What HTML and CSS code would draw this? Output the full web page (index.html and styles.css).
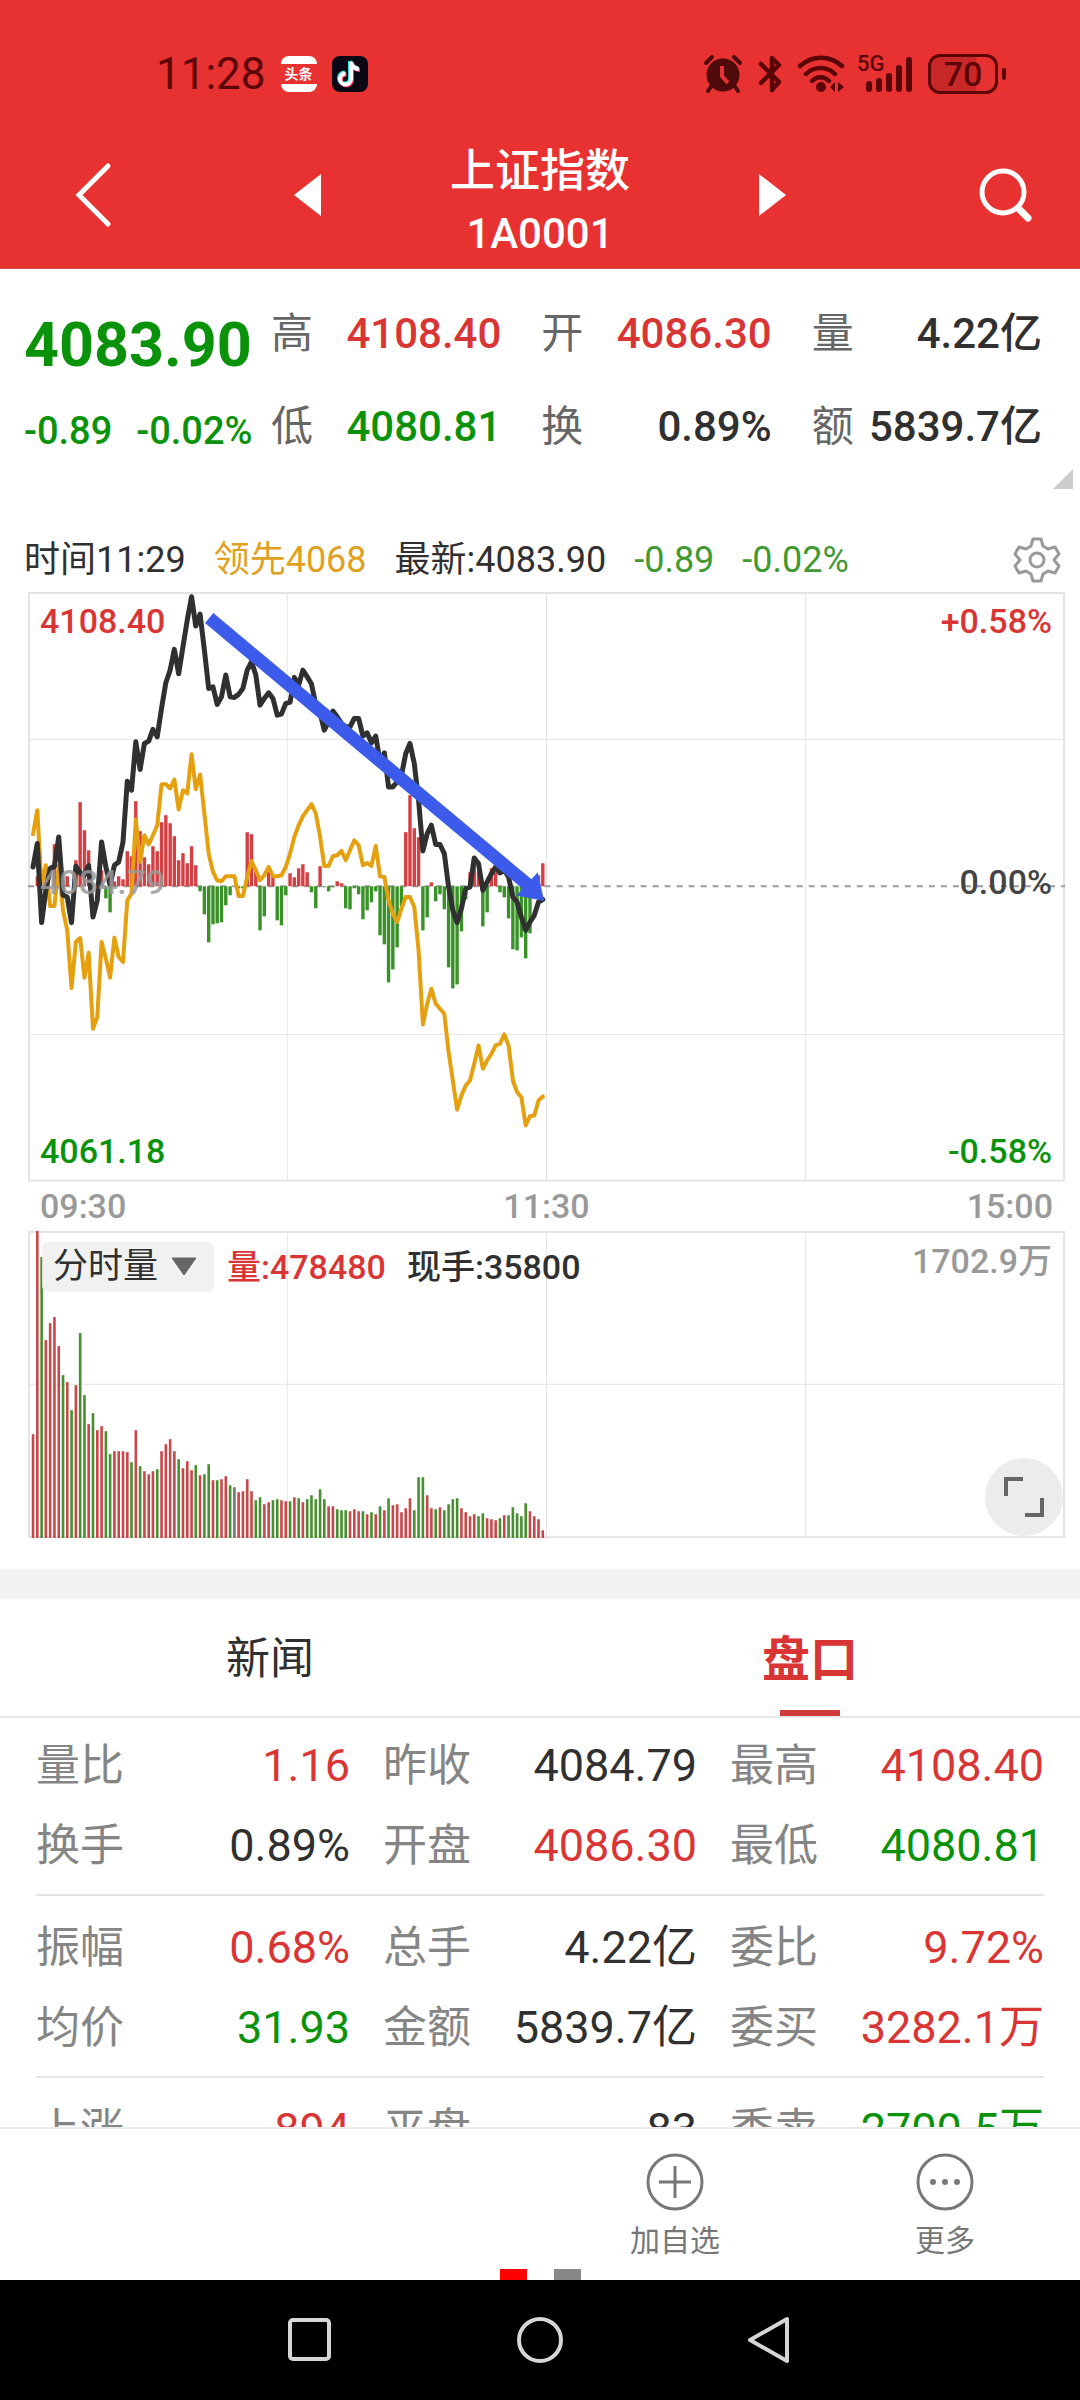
FILE: index.html
```
<!DOCTYPE html>
<html lang="zh-CN">
<head>
    <meta charset="UTF-8">
    <meta name="viewport" content="width=device-width, initial-scale=1.0">
    <title>上证指数 1A0001</title>
    <link rel="stylesheet" href="styles.css">
</head>
<body>
<div class="app">
    <header class="top">
        <div class="status-bar">
            <span class="clock">11:28</span>
            <span class="toutiao"><span>头条</span></span>
            <svg class="app-icon" width="36" height="36" viewBox="0 0 36 36">
                <rect width="36" height="36" rx="8" fill="#0b0714"/>
                <g fill="none" stroke-width="4">
                    <path d="M19 6v17a5.500 5.500 0 1 1-5.500-5.500M19 6c1 5 4 7 8 7" stroke="#35e6e0" transform="translate(-1 -1)"/>
                    <path d="M19 6v17a5.500 5.500 0 1 1-5.500-5.500M19 6c1 5 4 7 8 7" stroke="#f5355c" transform="translate(1 1)"/>
                    <path d="M19 6v17a5.500 5.500 0 1 1-5.500-5.500M19 6c1 5 4 7 8 7" stroke="#fff"/>
                </g>
            </svg>
            <span class="spacer"></span>
            <svg width="40" height="40" viewBox="0 0 40 40" fill="#4f0a0c">
                <circle cx="20" cy="21" r="16.500"/>
                <path d="M9 31l-4 6M31 31l4 6M3 9l6-6M37 9l-6-6" stroke="#4f0a0c" stroke-width="4" stroke-linecap="round"/>
                <path d="M19 12v10l6 7" fill="none" stroke="#e83131" stroke-width="4"/>
            </svg>
            <svg width="24" height="40" viewBox="0 0 24 40" fill="none" stroke="#5b0508" stroke-width="4.500" stroke-linejoin="round" stroke-linecap="round">
                <path d="M3 10l18 18-7 8V4l7 7L3 29"/>
            </svg>
            <svg width="48" height="40" viewBox="0 0 48 40">
                <g fill="none" stroke="#5b0508" stroke-width="4.500" stroke-linecap="round">
                    <path d="M3 12c12-11 30-11 42 0M9 20c8-8 21-8 29 0M15 27c5-5 12-5 17 0"/>
                </g>
                <circle cx="24" cy="33" r="5" fill="#5b0508"/>
                <path d="M38 28v10l-5-5zM41 28v10l6-5z" fill="#5b0508"/>
            </svg>
            <div class="signal">
                <span>5G</span>
                <svg width="48" height="40" viewBox="0 0 48 40" stroke="#5b0508" stroke-width="6" stroke-linecap="round">
                    <path d="M4 30v5M14 27v8M24 22v13M34 14v21M44 6v29"/>
                </svg>
            </div>
            <div class="battery">70</div>
        </div>
        <div class="title-bar">
            <button aria-label="返回">
                <svg width="40" height="66" viewBox="0 0 40 66" fill="none" stroke="#fff" stroke-width="5" stroke-linecap="round"><path d="M36 4L7 33l29 29"/></svg>
            </button>
            <button aria-label="上一个">
                <svg width="27" height="42" viewBox="0 0 27 42" fill="#fff"><path d="M27 0v42L0 21z"/></svg>
            </button>
            <h1>上证指数<small>1A0001</small></h1>
            <button aria-label="下一个">
                <svg width="27" height="42" viewBox="0 0 27 42" fill="#fff"><path d="M0 0v42l27-21z"/></svg>
            </button>
            <button class="search" aria-label="搜索">
                <svg width="54" height="54" viewBox="0 0 54 54" fill="none" stroke="#fff" stroke-linecap="round"><circle cx="25" cy="24" r="21" stroke-width="5"/><path d="M41 41l9 9" stroke-width="7"/></svg>
            </button>
        </div>
    </header>

    <section class="quote">
        <div class="price down">
            <strong>4083.90</strong>
            <p><span>-0.89</span><span>-0.02%</span></p>
        </div>
        <dl class="metrics">
            <div><dt>高</dt><dd class="up">4108.40</dd></div>
            <div><dt>开</dt><dd class="up">4086.30</dd></div>
            <div><dt>量</dt><dd>4.22亿</dd></div>
            <div><dt>低</dt><dd class="down">4080.81</dd></div>
            <div><dt>换</dt><dd>0.89%</dd></div>
            <div><dt>额</dt><dd>5839.7亿</dd></div>
        </dl>
        <svg class="corner" width="20" height="20" viewBox="0 0 20 20"><path d="M20 0v20H0z" fill="#ccc"/></svg>
    </section>

    <section class="charts">
        <div class="legend">
            <span>时间11:29</span>
            <span class="lead">领先4068</span>
            <span>最新:4083.90</span>
            <span class="fall">-0.89</span>
            <span class="fall">-0.02%</span>
            <button aria-label="设置">
                <svg width="48" height="48" viewBox="0 0 48 48" fill="none" stroke="#999" stroke-width="3" stroke-linejoin="round">
                    <path d="M20 3h8l2 7 5 3 7-2 4 7-5 6 5 6-4 7-7-2-5 3-2 7h-8l-2-7-5-3-7 2-4-7 5-6-5-6 4-7 7 2 5-3z"/>
                    <circle cx="24" cy="24" r="7"/>
                </svg>
            </button>
        </div>

        <div class="chart">
            <svg viewBox="0 0 1036 589">
                <g class="grid">
                    <path d="M1 1H1035V588H1Z" stroke-width="2"/>
                    <path d="M259 0V589M518 0V589M777 0V589M0 147H1036M0 442H1036"/>
                </g>
                <path class="zero" d="M0 294H1036"/>
                <g id="power-bars"></g>
                <polyline id="lead-line" class="lead-line"/>
                <polyline id="price-line" class="price-line"/>
                <g class="arrow">
                    <path d="M181 26L500 293" stroke-width="13"/>
                    <path d="M515 308L489 303L509 281Z"/>
                </g>
            </svg>
            <span class="tag left high up">4108.40</span>
            <span class="tag left mid base">4084.79</span>
            <span class="tag left low down">4061.18</span>
            <span class="tag right high up">+0.58%</span>
            <span class="tag right mid">0.00%</span>
            <span class="tag right low down">-0.58%</span>
        </div>

        <div class="time-axis"><span>09:30</span><span>11:30</span><span>15:00</span></div>

        <div class="chart">
            <svg viewBox="0 0 1036 307">
                <g class="grid">
                    <path d="M1 1H1035V306H1Z" stroke-width="2"/>
                    <path d="M259 0V307M518 0V307M777 0V307M0 153H1036"/>
                </g>
                <g id="volume-bars"></g>
            </svg>
            <div class="volume-head">
                <div class="picker">
                    <select aria-label="指标"><option>分时量</option></select>
                    <svg width="28" height="20" viewBox="0 0 28 20"><path d="M2 1h24L14 18z" fill="#666" stroke="#666" stroke-linejoin="round"/></svg>
                </div>
                <span class="up">量:478480</span>
                <span>现手:35800</span>
                <span class="max">1702.9万</span>
            </div>
            <button class="expand" aria-label="全屏">
                <svg width="40" height="40" viewBox="0 0 40 40" fill="none" stroke="#666" stroke-width="4"><path d="M2 19V2h17M38 21v17H21"/></svg>
            </button>
        </div>
    </section>

    <nav class="tabs">
        <button>新闻</button>
        <button class="active">盘口</button>
    </nav>

    <div class="detail">
        <table>
            <tbody>
                <tr><th>量比</th><td class="up">1.16</td><th>昨收</th><td>4084.79</td><th>最高</th><td class="up">4108.40</td></tr>
                <tr><th>换手</th><td>0.89%</td><th>开盘</th><td class="up">4086.30</td><th>最低</th><td class="down">4080.81</td></tr>
            </tbody>
            <tbody>
                <tr><th>振幅</th><td class="up">0.68%</td><th>总手</th><td>4.22亿</td><th>委比</th><td class="up">9.72%</td></tr>
                <tr><th>均价</th><td class="down">31.93</td><th>金额</th><td>5839.7亿</td><th>委买</th><td class="up">3282.1万</td></tr>
            </tbody>
            <tbody>
                <tr><th>上涨</th><td class="up">894</td><th>平盘</th><td>83</td><th>委卖</th><td class="down">2700.5万</td></tr>
            </tbody>
        </table>
    </div>

    <footer class="actions">
        <div class="action-row">
            <button class="add">
                <svg width="58" height="58" viewBox="0 0 58 58" fill="none" stroke="#777" stroke-width="3"><circle cx="29" cy="29" r="27"/><path d="M29 13v32M13 29h32"/></svg>
                加自选
            </button>
            <button>
                <svg width="58" height="58" viewBox="0 0 58 58" fill="#777"><circle cx="29" cy="29" r="27" fill="none" stroke="#777" stroke-width="3"/><circle cx="17" cy="29" r="3"/><circle cx="29" cy="29" r="3"/><circle cx="41" cy="29" r="3"/></svg>
                更多
            </button>
        </div>
        <div class="pager"><i class="on"></i><i></i></div>
    </footer>

    <nav class="system-nav">
        <button aria-label="最近任务"><svg width="48" height="48" viewBox="0 0 48 48"><rect x="4" y="4" width="39" height="39" rx="3"/></svg></button>
        <button aria-label="主屏幕"><svg width="48" height="48" viewBox="0 0 48 48"><circle cx="24" cy="24" r="21"/></svg></button>
        <button aria-label="后退"><svg width="48" height="48" viewBox="0 0 48 48"><path d="M41 3v42L4 24z"/></svg></button>
    </nav>
</div>

<script>
    const STEP = 4.28;
    const FIRST = 5;
    const ZERO = 294;
    const RED = '#d33f42';
    const GREEN = '#399128';

    // one value per minute, 09:30 - 11:29
    const price = [
        860, 790, 1027, 930, 865, 858, 770, 945, 950, 1027, 858, 878, 885, 856, 1010, 960, 785, 860, 915, 855,
        845, 785, 603, 630, 485, 568, 490, 483, 448, 470, 385, 308, 270, 208, 281, 200, 120, 50, 138, 102,
        210, 325, 320, 373, 350, 285, 350, 352, 343, 325, 270, 245, 285, 375, 355, 338, 355, 405, 402, 370,
        367, 292, 315, 270, 290, 312, 375, 400, 450, 425, 393, 410, 430, 440, 440, 415, 415, 468, 458, 488,
        468, 545, 518, 620, 620, 605, 585, 520, 490, 550, 660, 812, 760, 735, 793, 793, 820, 920, 990, 1027,
        985, 925, 920, 833, 850, 930, 905, 880, 860, 878, 870, 890, 950, 965, 1010, 1050, 1025, 1005, 965, 958
    ];
    const lead = [
        762, 690, 920, 855, 977, 977, 857, 990, 1050, 1223, 1085, 1073, 1192, 1117, 1345, 1310, 1085, 1135, 1192, 1072,
        1130, 1145, 960, 940, 718, 845, 765, 793, 765, 735, 612, 612, 625, 598, 688, 630, 640, 522, 627, 583,
        700, 820, 875, 900, 903, 888, 888, 888, 947, 947, 890, 843, 870, 900, 885, 860, 888, 888, 885, 860,
        820, 770, 735, 708, 690, 672, 700, 770, 857, 857, 828, 825, 812, 840, 810, 780, 795, 855, 848, 857,
        797, 888, 890, 960, 1000, 1025, 985, 950, 950, 980, 1110, 1332, 1270, 1225, 1270, 1285, 1300, 1415, 1500, 1588,
        1545, 1515, 1500, 1450, 1395, 1465, 1440, 1420, 1395, 1390, 1362, 1395, 1500, 1535, 1550, 1635, 1607, 1605, 1560, 1548
    ];
    const power = [
        0, 10, -4, 6, 0, 42, 20, 0, 10, 0, 26, 84, 56, 36, 0, 0, 16, -12, -26, 5,
        10, 7, 35, 30, 85, 55, 29, 22, 40, 35, 64, 71, 63, 50, 26, 33, 23, 40, 21, -5,
        -28, -56, -38, -37, -36, -19, -9, 0, -2, -2, 54, 52, 17, -44, -30, 15, 10, -34, -39, -9,
        13, 9, 18, 22, 14, -6, -22, 20, -1, -5, -1, 5, 3, -22, -23, -2, -8, -33, -24, -16,
        -5, -49, -58, -96, -83, -61, -20, 54, 91, 58, 49, -44, -31, 4, -15, -8, -23, -81, -102, -98,
        -45, -13, 14, 26, 15, -40, -26, 18, 14, -6, -11, -32, -63, -64, -51, -72, -47, -6, 11, 23
    ];
    const volume = [
        104, 308, 281, 198, 215, 221, 192, 163, 156, 128, 153, 205, 143, 114, 125, 108, 112, 107, 84, 87,
        87, 87, 86, 76, 108, 72, 67, 64, 67, 69, 87, 94, 99, 87, 79, 70, 77, 68, 73, 63,
        64, 74, 58, 58, 59, 62, 53, 51, 46, 47, 59, 47, 38, 41, 34, 36, 38, 39, 38, 37,
        37, 41, 40, 36, 39, 43, 39, 49, 39, 32, 32, 29, 28, 28, 27, 29, 27, 27, 24, 26,
        24, 32, 28, 40, 33, 34, 26, 30, 40, 28, 61, 61, 43, 30, 29, 31, 28, 34, 39, 40,
        30, 26, 22, 24, 22, 25, 20, 19, 18, 20, 23, 23, 31, 25, 22, 35, 27, 22, 19, 8
    ];
    // r = up minute, g = down minute, - = flat
    const volumeSide =
        'rrgrrrrgrgrggrgrrggr' +
        'rrrgrgrrrgrrrrgrrrgr' +
        'ggrgrrg-rrrrggrrggrr' +
        'grgrgggggrrgggrrrgrg' +
        'rgrgrrrrrgggrrgrgggg' +
        'rrrrggrrrgrgggggrrrr';

    function x(i) {
        return FIRST + i * STEP;
    }

    function drawLine(id, values) {
        const points = values.map((v, i) => `${x(i).toFixed(1)},${(v / 3 - 12).toFixed(1)}`);
        document.getElementById(id).setAttribute('points', points.join(' '));
    }

    function bar(i, top, height, width, color) {
        return `<rect x="${(x(i) - width / 2).toFixed(1)}" y="${top}" width="${width}" height="${height}" fill="${color}"/>`;
    }

    drawLine('price-line', price);
    drawLine('lead-line', lead);

    document.getElementById('power-bars').innerHTML = power.map((v, i) =>
        bar(i, v > 0 ? ZERO - v : ZERO, Math.abs(v), 3.4, v > 0 ? RED : GREEN)).join('');

    const sideColor = { r: '#c8484a', g: '#47902f', '-': '#777' };
    document.getElementById('volume-bars').innerHTML = volume.map((v, i) =>
        bar(i, 307 - v, v, 2.6, sideColor[volumeSide[i]])).join('');
</script>
</body>
</html>
```
FILE: styles.css
```
* {
    box-sizing: border-box;
}

body {
    margin: 0;
    font-family: Roboto, "Noto Sans CJK SC", sans-serif;
    font-size: 44px;
    color: #303030;
    background: #fff;
}

button,
select {
    margin: 0;
    padding: 0;
    border: none;
    background: none;
    font: inherit;
    color: inherit;
}

svg {
    display: block;
    flex: none;
}

.app {
    display: flex;
    flex-direction: column;
    height: 100vh;
}

.up {
    color: #d93535;
}

.down {
    color: #0a930a;
}

/* header */
.top {
    background: #e83131;
    color: #fff;
    padding-top: 46px;
    border-bottom: 1px solid #c05050;
}

.status-bar {
    display: flex;
    align-items: center;
    height: 56px;
    padding: 0 82px 0 156px;
    gap: 15px;
    color: #5b0508;
}

.spacer {
    flex: 1;
}

.toutiao {
    display: flex;
    align-items: center;
    width: 36px;
    height: 36px;
    border-radius: 8px;
    background: #fff;
}

.toutiao span {
    flex: 1;
    background: #e83131;
    color: #fff;
    font-size: 14px;
    font-weight: bold;
    line-height: 20px;
    text-align: center;
}

.signal {
    display: flex;
    position: relative;
    padding-left: 5px;
}

.signal span {
    position: absolute;
    left: -3px;
    top: 0;
    font-size: 22px;
    font-weight: 500;
    line-height: 20px;
}

.battery {
    position: relative;
    width: 70px;
    height: 40px;
    border: 3px solid #5b0508;
    border-radius: 12px;
    background: linear-gradient(90deg, #c82828 70%, transparent 70%);
    font-size: 34px;
    font-weight: 500;
    line-height: 34px;
    text-align: center;
}

.battery::after {
    content: "";
    position: absolute;
    right: -11px;
    top: 11px;
    width: 4px;
    height: 12px;
    border-radius: 2px;
    background: #5b0508;
}

.title-bar {
    display: grid;
    grid-template-columns: 17fr 23fr 20fr 23fr 17fr;
    align-items: center;
    height: 166px;
    padding-top: 20px;
}

.title-bar button {
    display: flex;
    justify-content: center;
}

.title-bar .search {
    justify-content: flex-end;
    padding-right: 48px;
}

.title-bar h1 {
    margin: 0;
    padding-top: 16px;
    font-size: 45px;
    font-weight: 500;
    line-height: 62px;
    text-align: center;
    white-space: nowrap;
}

.title-bar small {
    display: block;
    font-size: 42px;
}

/* quote */
.quote {
    display: flex;
    position: relative;
    height: 262px;
    padding: 38px 38px 0 24px;
}

.price {
    flex: 0 0 247px;
}

.price strong {
    display: block;
    font-size: 61px;
    font-weight: bold;
    line-height: 76px;
}

.price p {
    display: flex;
    gap: 24px;
    margin: 24px 0 0;
    font-size: 38px;
    font-weight: 500;
    line-height: 48px;
    white-space: nowrap;
}

.metrics {
    flex: 1;
    display: grid;
    grid-template-columns: repeat(3, 1fr);
    align-content: start;
    gap: 43px 40px;
    margin: 0;
    padding-top: 2px;
    font-size: 42px;
    line-height: 50px;
}

.metrics div {
    display: flex;
    justify-content: space-between;
    white-space: nowrap;
}

.metrics dt {
    color: #666;
}

.metrics dd {
    margin: 0;
    font-weight: 500;
}

.corner {
    position: absolute;
    right: 7px;
    top: 200px;
}

/* charts */
.charts {
    padding: 0 15px 31px 28px;
}

.legend {
    display: flex;
    align-items: center;
    gap: 28px;
    height: 61px;
    margin-left: -4px;
    padding-bottom: 4px;
    font-size: 36px;
    line-height: 46px;
    white-space: nowrap;
}

.legend .lead {
    color: #e0a020;
}

.legend .fall {
    color: #3f9a30;
}

.legend button {
    margin-left: auto;
    margin-right: 4px;
}

.chart {
    position: relative;
}

.chart > svg {
    width: 100%;
    height: auto;
}

.grid path {
    fill: none;
    stroke: #e4e4e4;
}

.zero {
    stroke: #999;
    stroke-width: 2;
    stroke-dasharray: 6 6;
}

.price-line,
.lead-line {
    fill: none;
    stroke: #303030;
    stroke-width: 5;
    stroke-linejoin: round;
    stroke-linecap: round;
}

.lead-line {
    stroke: #e5a00f;
    stroke-width: 4;
}

.arrow path {
    fill: #3d5bea;
    stroke: #3d5bea;
}

.tag {
    position: absolute;
    font-size: 34px;
    font-weight: 500;
    line-height: 40px;
}

.tag.left {
    left: 12px;
}

.tag.right {
    right: 13px;
}

.tag.high {
    top: 9px;
}

.tag.mid {
    top: 270px;
    color: #444;
}

.tag.low {
    bottom: 11px;
}

.tag.base {
    color: #999;
    opacity: 0.85;
}

.time-axis {
    display: flex;
    justify-content: space-between;
    padding: 0 12px;
    font-size: 34px;
    font-weight: 500;
    line-height: 49px;
    color: #999;
}

.volume-head {
    position: absolute;
    left: 14px;
    right: 13px;
    top: 11px;
    display: flex;
    align-items: center;
    gap: 21px;
    font-size: 34px;
    font-weight: 500;
    line-height: 48px;
    white-space: nowrap;
}

.picker {
    position: relative;
    margin-right: -8px;
}

.picker select {
    display: block;
    width: 172px;
    height: 50px;
    padding-left: 11px;
    border-radius: 6px;
    appearance: none;
    background: rgba(238, 238, 238, 0.85);
    font-size: 35px;
    font-weight: 400;
}

.picker svg {
    position: absolute;
    right: 16px;
    top: 15px;
    pointer-events: none;
}

.volume-head .max {
    align-self: flex-start;
    margin-left: auto;
    line-height: 38px;
    color: #999;
}

.expand {
    position: absolute;
    right: 2px;
    bottom: 2px;
    display: flex;
    align-items: center;
    justify-content: center;
    width: 78px;
    height: 78px;
    border-radius: 50%;
    background: #ececec;
}

/* tabs */
.tabs {
    display: flex;
    border-top: 30px solid #f2f2f2;
    border-bottom: 2px solid #e8e8e8;
}

.tabs button {
    flex: 1;
    position: relative;
    height: 117px;
    padding-bottom: 4px;
}

.tabs .active {
    font-size: 48px;
    font-weight: bold;
    color: #d93535;
}

.tabs .active::after {
    content: "";
    position: absolute;
    left: 50%;
    bottom: 0;
    width: 60px;
    height: 6px;
    margin-left: -30px;
    background: #d03a3c;
}

/* detail table */
.detail {
    flex: 1 1 0;
    min-height: 0;
    overflow: hidden;
    padding: 0 36px;
}

.detail table {
    width: 100%;
    table-layout: fixed;
    border-collapse: collapse;
    font-size: 45px;
    line-height: 80px;
    white-space: nowrap;
}

.detail th {
    width: 143px;
    padding: 0 0 0 33px;
    font-size: 44px;
    font-weight: 400;
    text-align: left;
    color: #858585;
}

.detail th:first-child {
    width: 110px;
    padding-left: 0;
}

.detail td {
    padding: 0;
    text-align: right;
}

.detail tbody + tbody {
    border-top: 2px solid #e4e4e4;
}

.detail tr:first-child > * {
    padding-top: 12px;
}

.detail tbody:first-child tr:first-child > * {
    padding-top: 8px;
}

.detail tr:last-child > * {
    padding-bottom: 8px;
}

/* bottom bar */
.actions {
    border-top: 2px solid #ececec;
    color: #777;
    font-size: 30px;
}

.action-row {
    display: grid;
    grid-template-columns: repeat(4, 1fr);
    padding-top: 24px;
}

.action-row button {
    display: flex;
    flex-direction: column;
    align-items: center;
    gap: 8px;
    height: 116px;
    line-height: 44px;
}

.action-row .add {
    grid-column: 3;
}

.pager {
    display: flex;
    justify-content: center;
    gap: 27px;
}

.pager i {
    width: 27px;
    height: 11px;
    background: #888;
}

.pager .on {
    background: #f00;
}

.system-nav {
    display: grid;
    grid-template-columns: repeat(3, 1fr);
    justify-items: center;
    align-items: center;
    height: 120px;
    padding: 0 18%;
    background: #000;
}

.system-nav svg {
    fill: none;
    stroke: #d6d6d6;
    stroke-width: 4;
    stroke-linejoin: round;
}
```
